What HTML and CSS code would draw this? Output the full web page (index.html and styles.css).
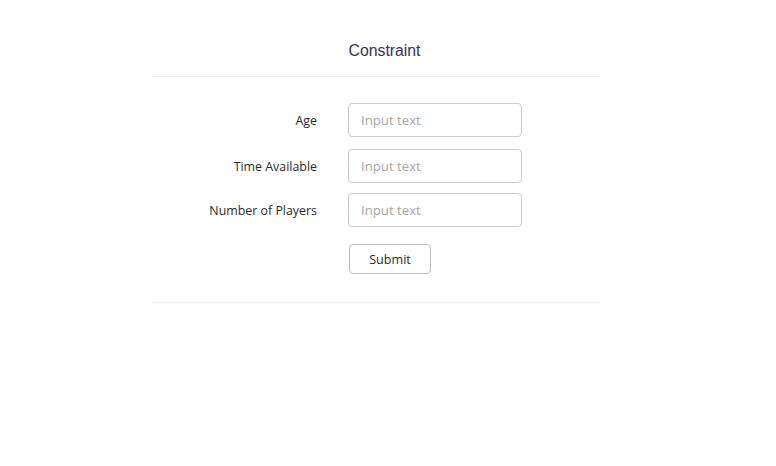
FILE: index.html
```html
<!DOCTYPE html>
<html>
<head>
<meta charset="utf-8">
<link rel="stylesheet" href="styles.css">
</head>
<body>
<div class="panel">
  <div class="header"><h1 class="title">Constraint</h1></div>
  <form class="form">
    <div class="row first">
      <label class="label">Age</label>
      <input class="input" type="text" placeholder="Input text">
    </div>
    <div class="row">
      <label class="label">Time Available</label>
      <input class="input" type="text" placeholder="Input text">
    </div>
    <div class="row">
      <label class="label">Number of Players</label>
      <input class="input" type="text" placeholder="Input text">
    </div>
    <div class="row actions">
      <span class="label"></span>
      <button class="btn" type="button">Submit</button>
    </div>
  </form>
</div>
</body>
</html>
```
FILE: styles.css
```css
html, body {
  margin: 0;
  padding: 0;
  background: #fff;
}
.panel {
  width: 448px;
  margin-left: 152px;
  font-family: "Open Sans", sans-serif;
}
.header {
  height: 77px;
  border-bottom: 1px solid #eeeeee;
  display: flex;
  justify-content: center;
  padding-left: 17px;
  box-sizing: border-box;
}
.title {
  margin: 42px 0 0 0;
  font-family: "Liberation Sans", Arial, sans-serif;
  font-weight: normal;
  font-size: 15.8px;
  line-height: 18px;
  color: #3d2d62;
}
.form {
  padding: 26px 0 28px;
  border-bottom: 1px solid #eeeeee;
  display: flex;
  flex-direction: column;
  gap: 10px;
}
.row {
  display: grid;
  grid-template-columns: 165px 174px;
  column-gap: 31px;
  align-items: center;
}
.row.first {
  margin-bottom: 2px;
}
.label {
  text-align: right;
  font-size: 12.4px;
  color: #2b2b2b;
}
.input {
  box-sizing: border-box;
  width: 174px;
  height: 34px;
  border: 1px solid #cccccc;
  border-radius: 4px;
  padding: 0 12px;
  font-family: "Open Sans", sans-serif;
  font-size: 13.2px;
  color: #333;
  outline: none;
}
.input::placeholder {
  color: #a6a6a6;
}
.actions {
  margin-top: 7px;
}
.btn {
  box-sizing: border-box;
  width: 82px;
  height: 30px;
  margin-left: 1px;
  background: #fff;
  border: 1px solid #bdbdbd;
  border-radius: 4px;
  font-family: "Open Sans", sans-serif;
  font-size: 12.6px;
  color: #2b2b2b;
  padding: 0;
}
```
